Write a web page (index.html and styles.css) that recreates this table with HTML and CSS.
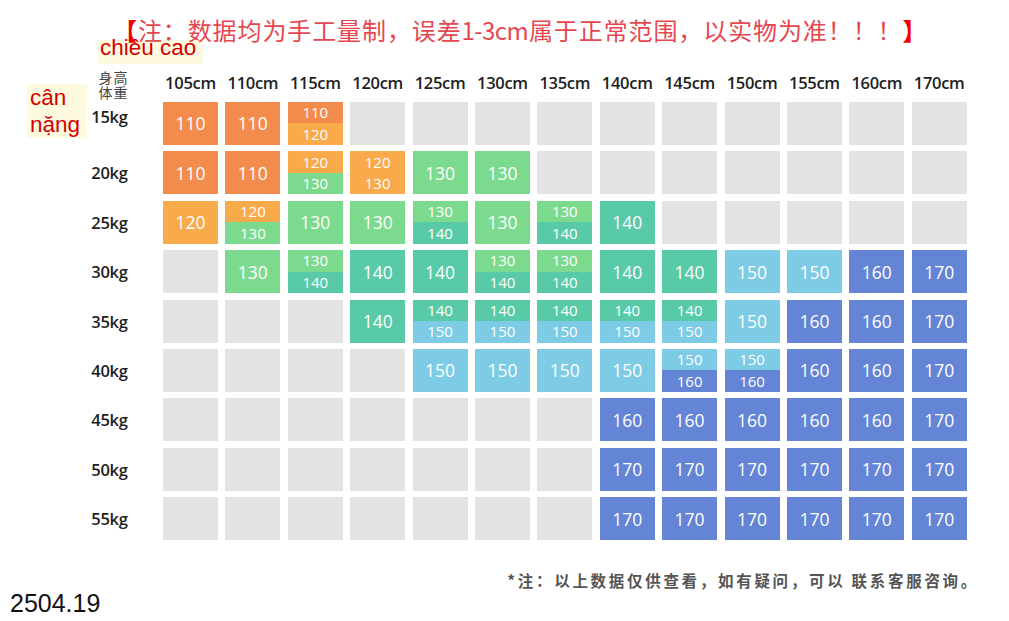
FILE: index.html
```html
<!DOCTYPE html>
<html lang="zh">
<head>
<meta charset="utf-8">
<title>尺码表</title>
<link rel="stylesheet" href="styles.css">
</head>
<body>
<div class="page">
  <div class="title"><span class="br">【</span>注：数据均为手工量制，误差<span class="lat">1-3cm</span>属于正常范围，以实物为准！！！<span class="br">】</span></div>

  <div class="chart">
    <div class="corner">身高<br>体重</div>
    <div class="hd">105cm</div><div class="hd">110cm</div><div class="hd">115cm</div><div class="hd">120cm</div><div class="hd">125cm</div><div class="hd">130cm</div><div class="hd">135cm</div><div class="hd">140cm</div><div class="hd">145cm</div><div class="hd">150cm</div><div class="hd">155cm</div><div class="hd">160cm</div><div class="hd">170cm</div>

    <div class="rl rl-first">15kg</div>
    <div class="c o">110</div><div class="c o">110</div><div class="c s"><span class="o">110</span><span class="lo">120</span></div>
    <div class="c e"></div><div class="c e"></div><div class="c e"></div><div class="c e"></div><div class="c e"></div><div class="c e"></div><div class="c e"></div><div class="c e"></div><div class="c e"></div><div class="c e"></div>

    <div class="rl">20kg</div>
    <div class="c o">110</div><div class="c o">110</div><div class="c s"><span class="lo">120</span><span class="g">130</span></div><div class="c s"><span class="lo">120</span><span class="lo">130</span></div><div class="c g">130</div><div class="c g">130</div>
    <div class="c e"></div><div class="c e"></div><div class="c e"></div><div class="c e"></div><div class="c e"></div><div class="c e"></div><div class="c e"></div>

    <div class="rl">25kg</div>
    <div class="c lo">120</div><div class="c s"><span class="lo">120</span><span class="g">130</span></div><div class="c g">130</div><div class="c g">130</div><div class="c s"><span class="g">130</span><span class="t">140</span></div><div class="c g">130</div><div class="c s"><span class="g">130</span><span class="t">140</span></div><div class="c t">140</div>
    <div class="c e"></div><div class="c e"></div><div class="c e"></div><div class="c e"></div><div class="c e"></div>

    <div class="rl">30kg</div>
    <div class="c e"></div><div class="c g">130</div><div class="c s"><span class="g">130</span><span class="t">140</span></div><div class="c t">140</div><div class="c t">140</div><div class="c s"><span class="g">130</span><span class="t">140</span></div><div class="c s"><span class="g">130</span><span class="t">140</span></div><div class="c t">140</div><div class="c t">140</div><div class="c lb">150</div><div class="c lb">150</div><div class="c b">160</div><div class="c b">170</div>

    <div class="rl">35kg</div>
    <div class="c e"></div><div class="c e"></div><div class="c e"></div><div class="c t">140</div><div class="c s"><span class="t">140</span><span class="lb">150</span></div><div class="c s"><span class="t">140</span><span class="lb">150</span></div><div class="c s"><span class="t">140</span><span class="lb">150</span></div><div class="c s"><span class="t">140</span><span class="lb">150</span></div><div class="c s"><span class="t">140</span><span class="lb">150</span></div><div class="c lb">150</div><div class="c b">160</div><div class="c b">160</div><div class="c b">170</div>

    <div class="rl">40kg</div>
    <div class="c e"></div><div class="c e"></div><div class="c e"></div><div class="c e"></div><div class="c lb">150</div><div class="c lb">150</div><div class="c lb">150</div><div class="c lb">150</div><div class="c s"><span class="lb">150</span><span class="b">160</span></div><div class="c s"><span class="lb">150</span><span class="b">160</span></div><div class="c b">160</div><div class="c b">160</div><div class="c b">170</div>

    <div class="rl">45kg</div>
    <div class="c e"></div><div class="c e"></div><div class="c e"></div><div class="c e"></div><div class="c e"></div><div class="c e"></div><div class="c e"></div><div class="c b">160</div><div class="c b">160</div><div class="c b">160</div><div class="c b">160</div><div class="c b">160</div><div class="c b">170</div>

    <div class="rl">50kg</div>
    <div class="c e"></div><div class="c e"></div><div class="c e"></div><div class="c e"></div><div class="c e"></div><div class="c e"></div><div class="c e"></div><div class="c b">170</div><div class="c b">170</div><div class="c b">170</div><div class="c b">170</div><div class="c b">170</div><div class="c b">170</div>

    <div class="rl">55kg</div>
    <div class="c e"></div><div class="c e"></div><div class="c e"></div><div class="c e"></div><div class="c e"></div><div class="c e"></div><div class="c e"></div><div class="c b">170</div><div class="c b">170</div><div class="c b">170</div><div class="c b">170</div><div class="c b">170</div><div class="c b">170</div>
  </div>

  <div class="note">*注：以上数据仅供查看，如有疑问，可以 联系客服咨询。</div>
  <div class="stamp">2504.19</div>

  <div class="ann ann-h">chiều cao</div>
  <div class="ann ann-w">cân<br>nặng</div>
</div>
</body>
</html>
```

FILE: styles.css
```css
* { box-sizing: border-box; }

html, body {
  margin: 0;
  padding: 0;
  background: #ffffff;
}

.page {
  position: relative;
  width: 1009px;
  height: 621px;
  overflow: hidden;
  font-family: "Open Sans", "Noto Sans CJK SC", sans-serif;
}

.title {
  position: relative;
  z-index: 2;
  padding: 15px 0 0 113px;
  height: 48px;
  font-family: "Noto Sans CJK SC", sans-serif;
  font-size: 24px;
  line-height: 30px;
  letter-spacing: 0.9px;
  color: #e6474f;
  white-space: nowrap;
  pointer-events: none;
}

.title .lat {
  letter-spacing: -0.6px;
  margin-right: 0.9px;
}

.title .br {
  color: #f50000;
  font-weight: 700;
}

.chart {
  display: grid;
  grid-template-columns: 69.6px repeat(13, 55px);
  grid-template-rows: 26px repeat(9, 43px);
  column-gap: 7.4px;
  row-gap: 6.4px;
  margin-top: 21.6px;
  padding-left: 86px;
}

.corner {
  align-self: end;
  margin-bottom: -5px;
  padding-right: 27px;
  text-align: right;
  font-family: "Noto Sans CJK SC", sans-serif;
  font-size: 14px;
  line-height: 15.5px;
  letter-spacing: 1px;
  color: #444;
  white-space: nowrap;
}

.hd {
  display: flex;
  align-items: center;
  justify-content: center;
  font-size: 16.5px;
  font-weight: 600;
  color: #1e1e1e;
  letter-spacing: -0.3px;
  white-space: nowrap;
}

.rl {
  display: flex;
  align-items: center;
  justify-content: flex-end;
  padding-right: 28px;
  font-size: 16.5px;
  font-weight: 600;
  color: #1e1e1e;
  letter-spacing: -0.3px;
}

.rl-first {
  padding-bottom: 14px;
}

.c {
  display: flex;
  align-items: center;
  justify-content: center;
  color: #ffffff;
  font-size: 17.5px;
}

.c.s {
  flex-direction: column;
  align-items: stretch;
}

.c.s span {
  flex: 1;
  display: flex;
  align-items: center;
  justify-content: center;
  font-size: 15px;
  line-height: 1;
}

.o  { background: #f28b4c; }
.lo { background: #f9aa4a; }
.g  { background: #7cda8e; }
.t  { background: #58caa8; }
.lb { background: #7ecbe5; }
.b  { background: #6484d6; }
.e  { background: #e3e3e3; }

.note {
  margin-top: 30.8px;
  padding-right: 30px;
  text-align: right;
  font-family: "Noto Sans CJK SC", sans-serif;
  font-size: 15.5px;
  line-height: 18px;
  font-weight: 700;
  letter-spacing: 2.7px;
  color: #555;
  white-space: pre;
}

.stamp {
  padding-left: 10px;
  font-family: "Liberation Sans", Arial, sans-serif;
  font-size: 25px;
  line-height: 28px;
  color: #111;
}

.ann {
  position: absolute;
  z-index: 1;
  background: #fefae0;
  color: #d20000;
  font-family: "Liberation Sans", Arial, sans-serif;
  font-size: 22.5px;
  padding-left: 3px;
  white-space: nowrap;
}

.ann-h {
  left: 97px;
  top: 40px;
  width: 106px;
  height: 24px;
  line-height: 16px;
}

.ann-w {
  left: 27px;
  top: 84px;
  width: 60px;
  height: 54px;
  line-height: 27px;
}
```
